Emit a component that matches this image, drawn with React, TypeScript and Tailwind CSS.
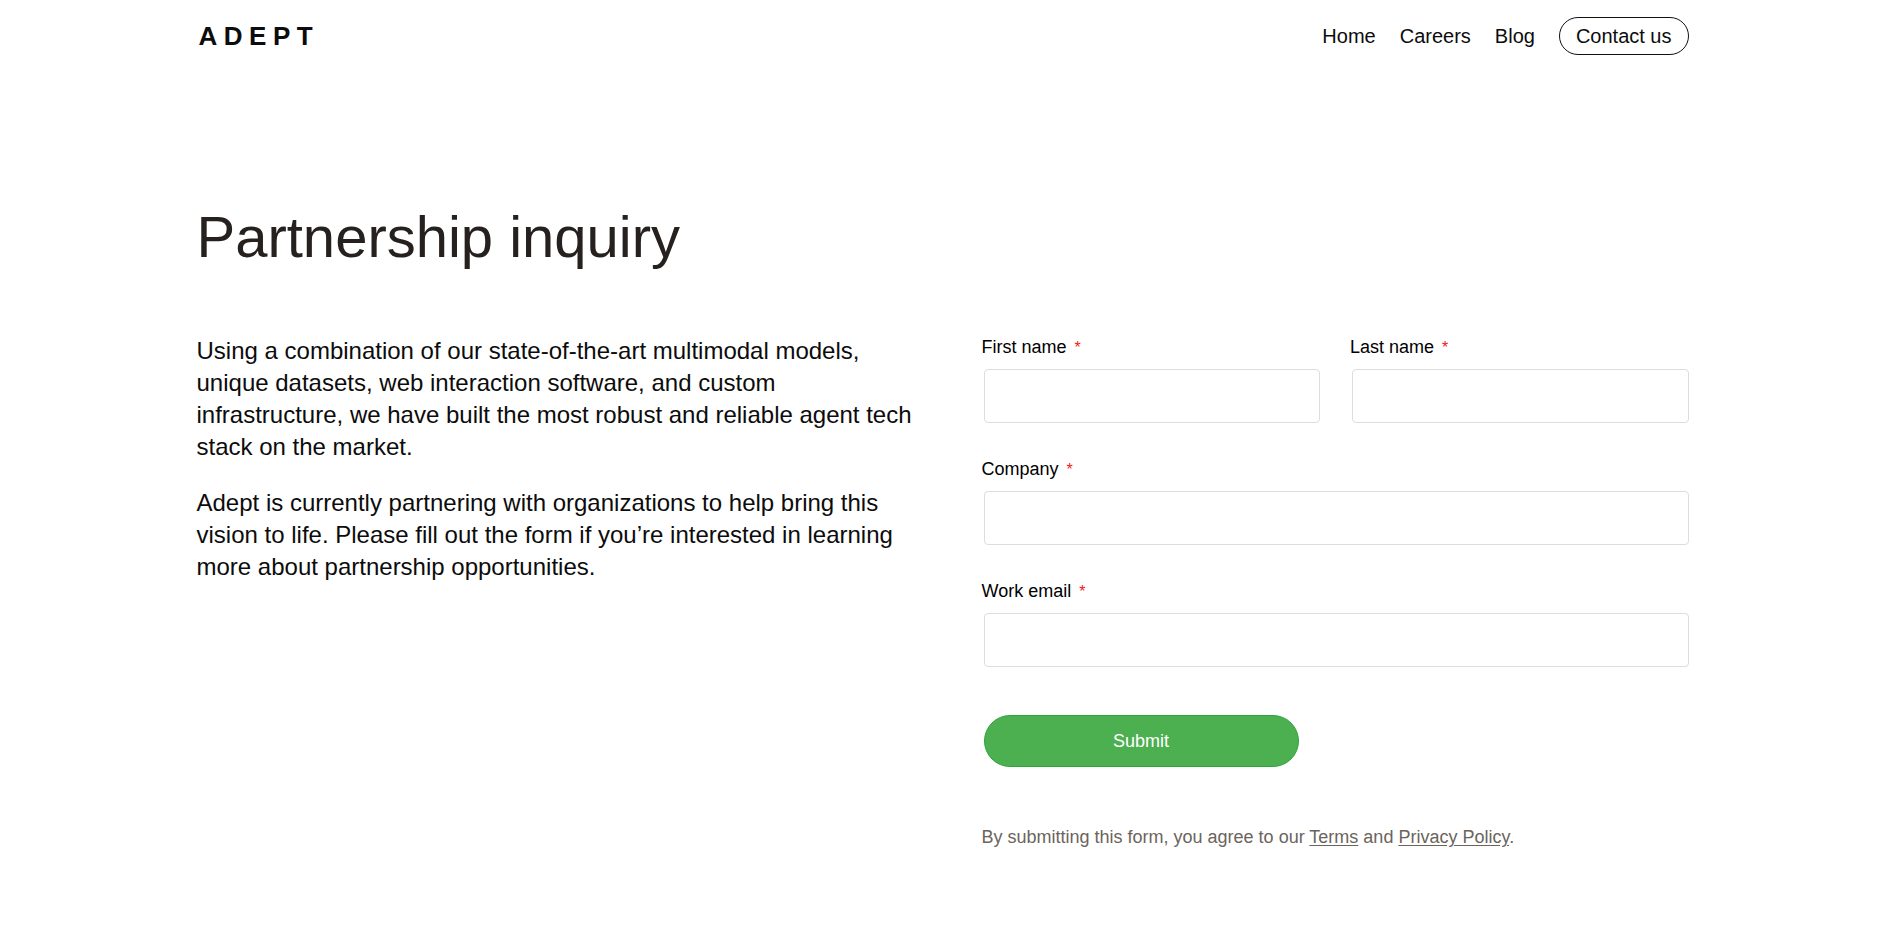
import React from "react";

type FieldProps = { id: string; label: string; type?: string };

function Field({ id, label, type = "text" }: FieldProps) {
  return (
    <div className="flex min-w-0 flex-col">
      <label htmlFor={id} className="text-lg leading-6 text-black">
        {label}
        <span className="ml-2 text-base leading-4 text-[#f02020]">*</span>
      </label>
      <div className="mt-2.5 flex pl-0.5">
        <input
          id={id}
          name={id}
          type={type}
          required
          className="h-[54px] w-full rounded border border-[#dddddd] bg-white px-4 text-lg shadow-none outline-none focus:border-gray-500"
        />
      </div>
    </div>
  );
}

export default function App() {
  return (
    <div className="min-h-screen bg-white pr-[11px] font-['Liberation_Sans',Arial,sans-serif] text-[#0c0c0c]">
      <div className="mx-auto max-w-[1492px]">
        <header className="flex items-center justify-between pt-[17px]">
          <a href="#" className="pl-0.5 text-[26px] leading-9 font-bold tracking-[0.25em]">
            ADEPT
          </a>
          <nav className="flex items-center gap-6 text-xl leading-9">
            <a href="#home">Home</a>
            <a href="#careers">Careers</a>
            <a href="#blog">Blog</a>
            <a href="#contact" className="rounded-full border border-[#111111] px-4">
              Contact us
            </a>
          </nav>
        </header>

        <main>
          <h1 className="mt-[146px] text-[58px] leading-[72px] text-[#26211e]">
            Partnership inquiry
          </h1>

          <div className="mt-[62px] grid grid-cols-[719fr_707fr] gap-[66px]">
            <div className="flex flex-col gap-6 text-[24px] leading-8">
              <p>
                Using a combination of our state-of-the-art multimodal models, unique datasets,
                web interaction software, and custom infrastructure, we have built the most
                robust and reliable agent tech stack on the market.
              </p>
              <p>
                Adept is currently partnering with organizations to help bring this vision to
                life. Please fill out the form if you’re interested in learning more about
                partnership opportunities.
              </p>
            </div>

            <form onSubmit={(e) => e.preventDefault()}>
              <div className="flex flex-col gap-[34px]">
                <div className="grid grid-cols-2 gap-[30px]">
                  <Field id="first-name" label="First name" />
                  <Field id="last-name" label="Last name" />
                </div>
                <Field id="company" label="Company" />
                <Field id="work-email" label="Work email" type="email" />
              </div>
              <div className="mt-12 pl-0.5">
                <button
                  type="submit"
                  className="h-[52px] w-[315px] rounded-full border border-[#30a43c] bg-[#4caf50] text-lg text-white"
                >
                  Submit
                </button>
              </div>
              <p className="mt-[58px] text-lg leading-6 text-[#6b645c]">
                By submitting this form, you agree to our{" "}
                <a href="#terms" className="underline underline-offset-2">
                  Terms
                </a>{" "}
                and{" "}
                <a href="#privacy" className="underline underline-offset-2">
                  Privacy Policy
                </a>
                .
              </p>
            </form>
          </div>
        </main>
      </div>
    </div>
  );
}
